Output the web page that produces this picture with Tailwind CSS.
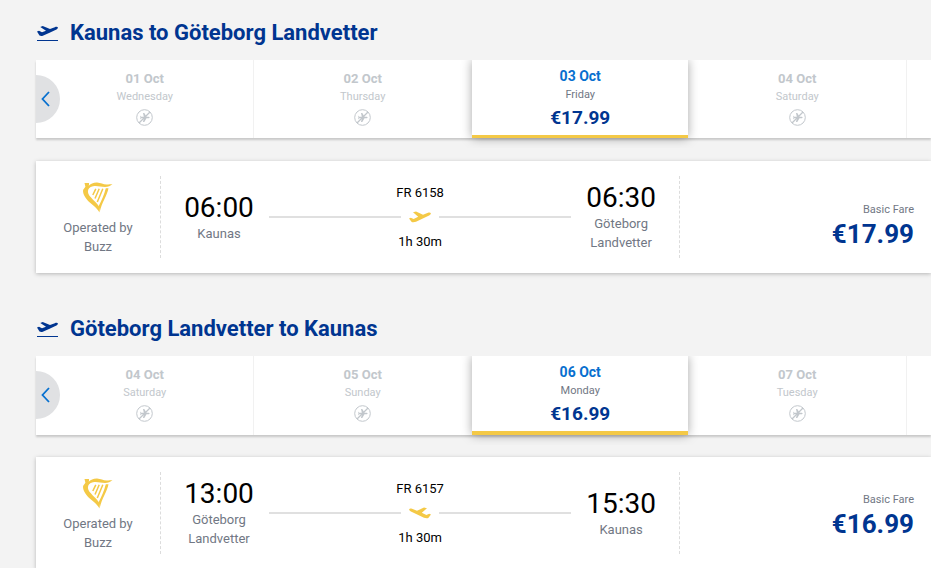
<!DOCTYPE html>
<html lang="en">
<head>
<meta charset="utf-8">
<meta name="viewport" content="width=device-width, initial-scale=1">
<title>Select flights</title>
<script src="https://cdn.jsdelivr.net/npm/@tailwindcss/browser@4"></script>
</head>
<body class="bg-[#f3f3f3] font-[Roboto,sans-serif] text-black overflow-hidden">
<svg class="hidden" aria-hidden="true">
  <symbol id="takeoff" viewBox="0 0 22 16"><path d="M0 5.500 2 4.700 5 6.200 9 4.800 3.300 1 5.700.1 13 3.100 17.800 1.200C19 .7 20.700.7 20.900 1.500 21.100 2.300 20.300 3 19.500 3.400L12 7 5.800 9.700C4.800 10 3.500 10 2.500 9.500Z"/><path d="M0 14h21v1H0z"/></symbol>
  <symbol id="plane" viewBox="0 0 22 12"><path d="M4 1.200 7 .6 14 3.700 19 1.800c1.200-.5 2.500-.4 2.800.4.300.8-.5 1.700-1.700 2.200L7 10.800c-1.300.5-3 .6-4.300.3L0 7.500l1.800-.7 2.800 1.100 4.600-2.200Z"/></symbol>
  <symbol id="harp" viewBox="0 0 30 31"><path d="M1.500.9h4.500v2.200L5.500 4C7.500 1.800 10.500.4 14 .5c4 .2 6 2 9.500 2 2.500 0 4-.3 6-.5-2 1.800-4.500 3-7.500 3-4.500 0-8-1.700-12-.7-4 1-5.300 3.200-5 6 .4 4.500 8 9 11.200 14.500L16.500 30.500C13.500 24.500 7.500 22.500 3.500 17 1 13.500-.5 10.500.2 7.800L2.400 4.800Z"/><path d="M25.500 6.300C24 14 19 20 16.700 30l-1-6C19 18 21 13 22.800 6.300Z"/><path d="M12.800 6.800 9.800 13M16.200 6.800 12 16.500M19.800 6.800 14.300 20" fill="none" stroke="currentColor" stroke-width="1.500"/></symbol>
  <symbol id="noflight" viewBox="0 0 17 17"><circle cx="8.500" cy="8.500" r="7.800" fill="none" stroke="currentColor" stroke-width="1"/><path d="M3 14 14 3" stroke="currentColor" stroke-width="1.200"/><path d="m4 6.500 1.300 1.200h2.500L7 4h1.300l2.200 3.700h2.200c1.200 0 1.200 1.600 0 1.600h-2.200L8.300 13H7l.8-3.700H5.300L4 10.500l.5-2Z"/></symbol>
</svg>

<main class="pl-9">
  <section class="pt-4">
    <h2 class="flex h-8 items-center gap-[11px] text-[22px] font-bold text-[#003590]"><svg class="mt-1 ml-px h-4 w-[22px] fill-current"><use href="#takeoff"/></svg>Kaunas to Göteborg Landvetter</h2>

    <div class="relative mt-3 h-[78px] bg-white shadow-[0_2px_2px_rgba(0,0,0,0.18)]">
      <div class="grid h-full grid-cols-[repeat(4,24.3%)_1fr] [clip-path:inset(0_0_-10px_0)]">
        <button class="flex flex-col items-center pt-2.5 text-[#c2c7cc]"><b class="text-[13px] leading-[18px]">01 Oct</b><span class="text-[11px] leading-[18px]">Wednesday</span><svg class="mt-[3px] size-[17px] fill-current"><use href="#noflight"/></svg></button>
        <button class="flex flex-col items-center border-l border-[#f1f1f1] pt-2.5 text-[#c2c7cc]"><b class="text-[13px] leading-[18px]">02 Oct</b><span class="text-[11px] leading-[18px]">Thursday</span><svg class="mt-[3px] size-[17px] fill-current"><use href="#noflight"/></svg></button>
        <button aria-pressed="true" class="z-10 ml-px flex flex-col items-center border-b-3 border-b-[#f4c946] bg-white pt-[7px] text-[#0770cf] shadow-[0_0_10px_rgba(0,0,0,0.35)]"><b class="text-sm leading-[18px]">03 Oct</b><span class="text-[11px] leading-5 text-[#717784]">Friday</span><b class="mt-px text-[19px] leading-6 text-[#003590]">€17.99</b></button>
        <button class="flex flex-col items-center pt-2.5 text-[#c2c7cc]"><b class="text-[13px] leading-[18px]">04 Oct</b><span class="text-[11px] leading-[18px]">Saturday</span><svg class="mt-[3px] size-[17px] fill-current"><use href="#noflight"/></svg></button>
        <div class="border-l border-[#f1f1f1]"></div>
      </div>
      <button aria-label="Previous dates" class="absolute top-[15px] left-0 z-20 flex h-12 w-6 items-center rounded-r-full bg-[#e0e1e3] pl-[5px] text-[#0770cf]"><svg class="h-4 w-[9px]" viewBox="0 0 9 16" fill="none" stroke="currentColor" stroke-width="1.800"><path d="M8 1 1.500 8 8 15"/></svg></button>
    </div>

    <article class="mt-[23px] flex h-28 bg-white py-[15px] shadow-[0_1px_4px_rgba(0,0,0,0.25)]">
      <div class="flex w-[125px] flex-col items-center border-r border-dashed border-[#dcdcdc] px-6 pt-1.5 text-center text-[13px] leading-[19px] text-[#717784]"><svg class="mb-[5px] h-[31px] w-[30px] shrink-0 fill-current text-[#f4c946]"><use href="#harp"/></svg><p>Operated by Buzz</p></div>
      <div class="grid w-[58%] grid-cols-[84px_1fr_84px] items-center gap-2 border-r border-dashed border-[#dcdcdc] px-4 text-center text-[13px]">
        <div><time class="block text-[28px] leading-8">06:00</time><p class="leading-[19px] text-[#717784]">Kaunas</p></div>
        <div class="leading-[19px]"><p>FR 6158</p>
          <div class="flex h-[30px] items-center gap-2"><i class="h-0.5 flex-1 bg-[#e0e0e0]"></i><svg class="h-3 w-[22px] fill-[#f4c946]"><use href="#plane"/></svg><i class="h-0.5 flex-1 bg-[#e0e0e0]"></i></div>
          <p>1h 30m</p></div>
        <div><time class="block text-[28px] leading-8">06:30</time><p class="leading-[19px] text-[#717784]">Göteborg Landvetter</p></div>
      </div>
      <div class="flex flex-1 flex-col justify-center pt-[18px] pr-[17px] text-right"><span class="text-[11px] leading-4 text-[#717784]">Basic Fare</span><b class="text-[26px] leading-8 text-[#003590]">€17.99</b></div>
    </article>
  </section>

  <section class="pt-[39px]">
    <h2 class="flex h-8 items-center gap-[11px] text-[22px] font-bold text-[#003590]"><svg class="mt-1 ml-px h-4 w-[22px] fill-current"><use href="#takeoff"/></svg>Göteborg Landvetter to Kaunas</h2>

    <div class="relative mt-3 h-[79px] bg-white shadow-[0_2px_2px_rgba(0,0,0,0.18)]">
      <div class="grid h-full grid-cols-[repeat(4,24.3%)_1fr] [clip-path:inset(0_0_-10px_0)]">
        <button class="flex flex-col items-center pt-2.5 text-[#c2c7cc]"><b class="text-[13px] leading-[18px]">04 Oct</b><span class="text-[11px] leading-[18px]">Saturday</span><svg class="mt-[3px] size-[17px] fill-current"><use href="#noflight"/></svg></button>
        <button class="flex flex-col items-center border-l border-[#f1f1f1] pt-2.5 text-[#c2c7cc]"><b class="text-[13px] leading-[18px]">05 Oct</b><span class="text-[11px] leading-[18px]">Sunday</span><svg class="mt-[3px] size-[17px] fill-current"><use href="#noflight"/></svg></button>
        <button aria-pressed="true" class="z-10 ml-px flex flex-col items-center border-b-4 border-b-[#f4c946] bg-white pt-[7px] text-[#0770cf] shadow-[0_0_10px_rgba(0,0,0,0.35)]"><b class="text-sm leading-[18px]">06 Oct</b><span class="text-[11px] leading-5 text-[#717784]">Monday</span><b class="mt-px text-[19px] leading-6 text-[#003590]">€16.99</b></button>
        <button class="flex flex-col items-center pt-2.5 text-[#c2c7cc]"><b class="text-[13px] leading-[18px]">07 Oct</b><span class="text-[11px] leading-[18px]">Tuesday</span><svg class="mt-[3px] size-[17px] fill-current"><use href="#noflight"/></svg></button>
        <div class="border-l border-[#f1f1f1]"></div>
      </div>
      <button aria-label="Previous dates" class="absolute top-[15px] left-0 z-20 flex h-12 w-6 items-center rounded-r-full bg-[#e0e1e3] pl-[5px] text-[#0770cf]"><svg class="h-4 w-[9px]" viewBox="0 0 9 16" fill="none" stroke="currentColor" stroke-width="1.800"><path d="M8 1 1.500 8 8 15"/></svg></button>
    </div>

    <article class="mt-[22px] flex h-28 bg-white py-[15px] shadow-[0_1px_4px_rgba(0,0,0,0.25)]">
      <div class="flex w-[125px] flex-col items-center border-r border-dashed border-[#dcdcdc] px-6 pt-1.5 text-center text-[13px] leading-[19px] text-[#717784]"><svg class="mb-[5px] h-[31px] w-[30px] shrink-0 fill-current text-[#f4c946]"><use href="#harp"/></svg><p>Operated by Buzz</p></div>
      <div class="grid w-[58%] grid-cols-[84px_1fr_84px] items-center gap-2 border-r border-dashed border-[#dcdcdc] px-4 text-center text-[13px]">
        <div><time class="block text-[28px] leading-8">13:00</time><p class="leading-[19px] text-[#717784]">Göteborg Landvetter</p></div>
        <div class="leading-[19px]"><p>FR 6157</p>
          <div class="flex h-[30px] items-center gap-2"><i class="h-0.5 flex-1 bg-[#e0e0e0]"></i><svg class="h-3 w-[22px] -scale-x-100 fill-[#f4c946]"><use href="#plane"/></svg><i class="h-0.5 flex-1 bg-[#e0e0e0]"></i></div>
          <p>1h 30m</p></div>
        <div><time class="block text-[28px] leading-8">15:30</time><p class="leading-[19px] text-[#717784]">Kaunas</p></div>
      </div>
      <div class="flex flex-1 flex-col justify-center pt-1.5 pr-[17px] text-right"><span class="text-[11px] leading-4 text-[#717784]">Basic Fare</span><b class="text-[26px] leading-8 text-[#003590]">€16.99</b></div>
    </article>
  </section>
</main>
</body>
</html>
